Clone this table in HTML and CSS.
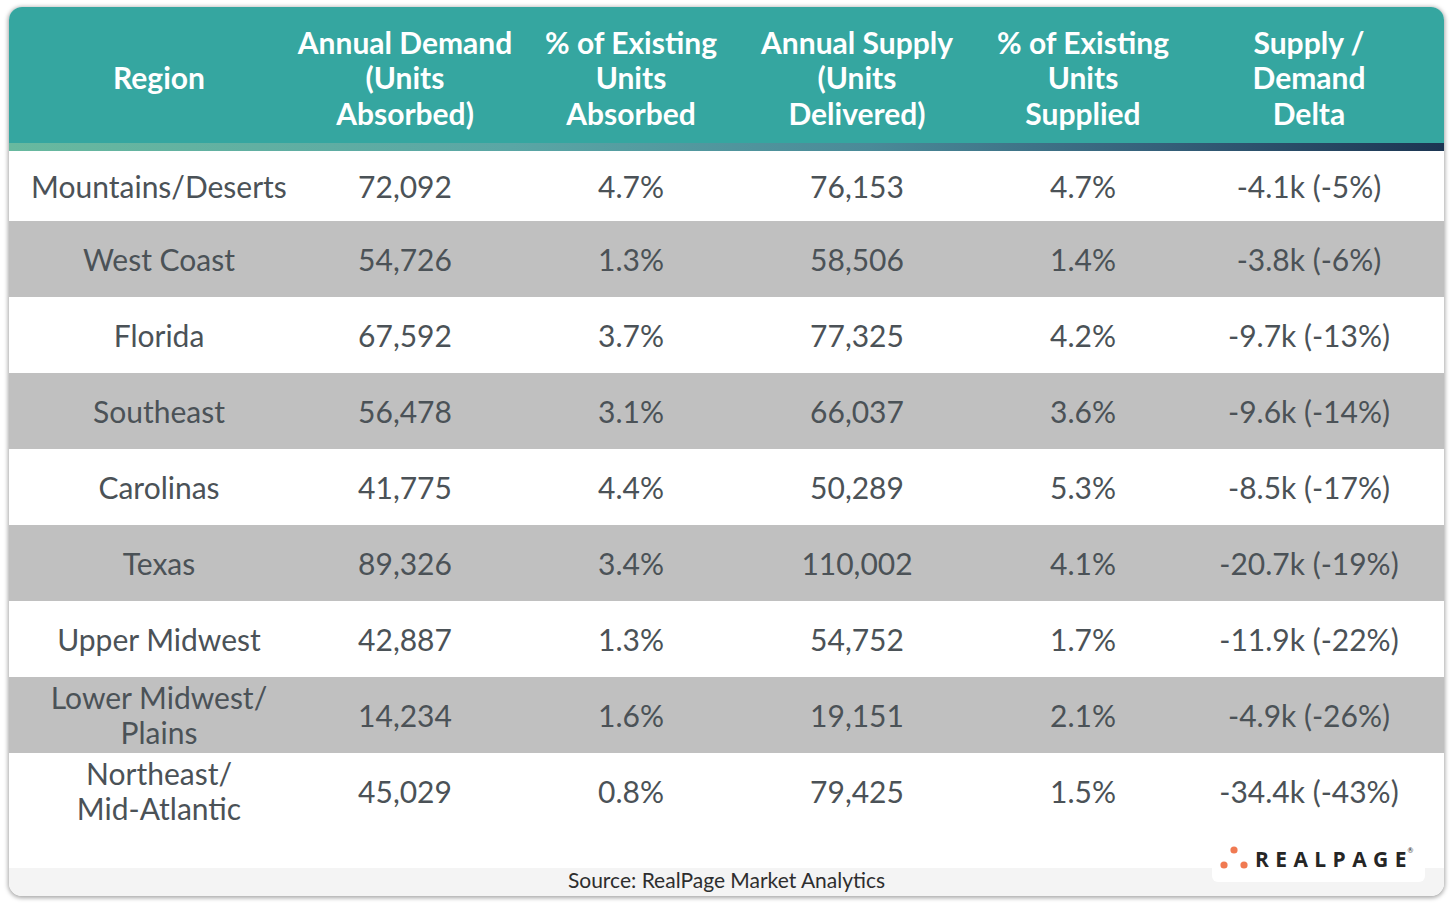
FILE: index.html
```html
<!DOCTYPE html>
<html>
<head>
<meta charset="utf-8">
<link rel="stylesheet" href="styles.css">
</head>
<body>
<div class="card">
  <div class="row head">
    <div class="cell">Region</div>
    <div class="cell">Annual Demand<br>(Units<br>Absorbed)</div>
    <div class="cell">% of Existing<br>Units<br>Absorbed</div>
    <div class="cell">Annual Supply<br>(Units<br>Delivered)</div>
    <div class="cell">% of Existing<br>Units<br>Supplied</div>
    <div class="cell">Supply /<br>Demand<br>Delta</div>
  </div>
  <div class="strip"></div>
  <div class="row first">
    <div class="cell">Mountains/Deserts</div><div class="cell">72,092</div><div class="cell">4.7%</div><div class="cell">76,153</div><div class="cell">4.7%</div><div class="cell">-4.1k (-5%)</div>
  </div>
  <div class="row gray">
    <div class="cell">West Coast</div><div class="cell">54,726</div><div class="cell">1.3%</div><div class="cell">58,506</div><div class="cell">1.4%</div><div class="cell">-3.8k (-6%)</div>
  </div>
  <div class="row">
    <div class="cell">Florida</div><div class="cell">67,592</div><div class="cell">3.7%</div><div class="cell">77,325</div><div class="cell">4.2%</div><div class="cell">-9.7k (-13%)</div>
  </div>
  <div class="row gray">
    <div class="cell">Southeast</div><div class="cell">56,478</div><div class="cell">3.1%</div><div class="cell">66,037</div><div class="cell">3.6%</div><div class="cell">-9.6k (-14%)</div>
  </div>
  <div class="row">
    <div class="cell">Carolinas</div><div class="cell">41,775</div><div class="cell">4.4%</div><div class="cell">50,289</div><div class="cell">5.3%</div><div class="cell">-8.5k (-17%)</div>
  </div>
  <div class="row gray">
    <div class="cell">Texas</div><div class="cell">89,326</div><div class="cell">3.4%</div><div class="cell">110,002</div><div class="cell">4.1%</div><div class="cell">-20.7k (-19%)</div>
  </div>
  <div class="row">
    <div class="cell">Upper Midwest</div><div class="cell">42,887</div><div class="cell">1.3%</div><div class="cell">54,752</div><div class="cell">1.7%</div><div class="cell">-11.9k (-22%)</div>
  </div>
  <div class="row gray">
    <div class="cell">Lower Midwest/<br>Plains</div><div class="cell">14,234</div><div class="cell">1.6%</div><div class="cell">19,151</div><div class="cell">2.1%</div><div class="cell">-4.9k (-26%)</div>
  </div>
  <div class="row">
    <div class="cell">Northeast/<br>Mid-Atlantic</div><div class="cell">45,029</div><div class="cell">0.8%</div><div class="cell">79,425</div><div class="cell">1.5%</div><div class="cell">-34.4k (-43%)</div>
  </div>
  <div class="spacer"></div>
  <div class="footer">Source: RealPage Market Analytics</div>
  <div class="logo">
    <svg class="dots" width="28" height="24" viewBox="0 0 28 24">
      <circle cx="14" cy="4" r="3.6" fill="#f07a52"/>
      <circle cx="4" cy="19" r="3.6" fill="#f07a52"/>
      <circle cx="24" cy="19" r="3.6" fill="#f07a52"/>
    </svg>
    <span class="brand">REALPAG<span class="last">E</span></span><span class="reg">®</span>
  </div>
</div>
</body>
</html>
```
FILE: styles.css
```css
html, body {
  margin: 0;
  padding: 0;
  background: #ffffff;
}
body {
  padding: 7px 11px 7px 9px;
  font-family: Lato, "Open Sans", sans-serif;
}
.card {
  position: relative;
  width: 1435px;
  height: 889px;
  border-radius: 13px;
  overflow: hidden;
  background: #ffffff;
  box-shadow: 0 1px 4px 1px rgba(0,0,0,0.35);
  display: flex;
  flex-direction: column;
}
.row {
  display: grid;
  grid-template-columns: 266px repeat(5, 226px);
  padding: 0 22px 0 17px;
  height: 76px;
  align-items: center;
  color: #4b5257;
  font-size: 30px;
  line-height: 35px;
}
.row.first { height: 70px; }
.row.gray { background: #c0c0c0; }
.cell {
  text-align: center;
  white-space: nowrap;
}
.row.head {
  height: 136px;
  background: #35a6a0;
  color: #ffffff;
  font-weight: 700;
  font-size: 30px;
  line-height: 35.5px;
  padding-top: 6px;
  box-sizing: border-box;
}
.strip {
  height: 8px;
  background: linear-gradient(90deg, #68b99f 0%, #5aa6a5 35%, #4a8a98 60%, #35607a 80%, #1c3552 100%);
}
.spacer {
  flex: 1;
}
.footer {
  height: 28px;
  background: #f4f4f4;
  text-align: center;
  font-size: 21px;
  line-height: 24px;
  color: #2e2e2e;
}
.logo {
  position: absolute;
  right: 19px;
  bottom: 14px;
  width: 213px;
  height: 46px;
  background: #ffffff;
  border-radius: 0 0 6px 6px;
  display: flex;
  align-items: center;
  padding-left: 8px;
  box-sizing: border-box;
}
.dots {
  display: block;
  margin-top: -2px;
}
.brand {
  margin-left: 7px;
  font-family: "Open Sans", Lato, sans-serif;
  font-weight: 700;
  font-size: 21px;
  letter-spacing: 6.4px;
  color: #262626;
}
.brand .last {
  letter-spacing: 0;
}
.reg {
  font-size: 7px;
  color: #262626;
  align-self: flex-start;
  margin-top: 10px;
  margin-left: 1px;
}
```
